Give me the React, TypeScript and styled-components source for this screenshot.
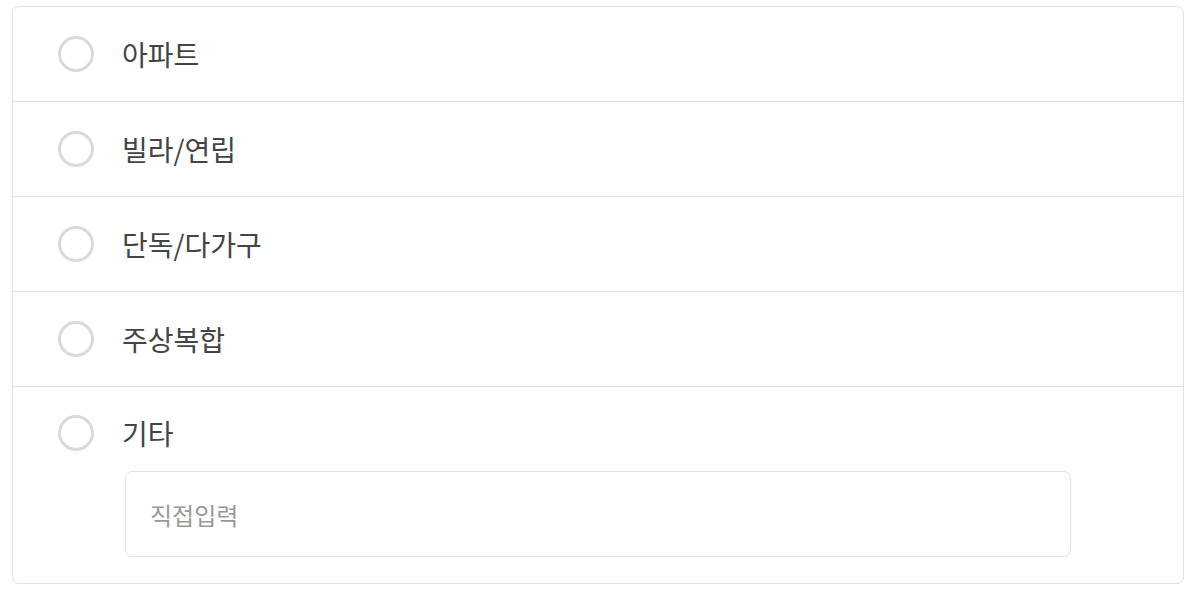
import styled, { createGlobalStyle } from "styled-components";

const GlobalStyle = createGlobalStyle`
  body {
    margin: 0;
    background: #fff;
    font-family: "Noto Sans CJK KR", "Noto Sans", sans-serif;
  }
`

const Page = styled.div`
  padding: 6px 16px 9px 12px;
`

const Card = styled.div`
  border: 1px solid #e2e2e2;
  border-radius: 7px;
  background: #fff;
  overflow: hidden;
`

const Row = styled.div`
  border-bottom: 1px solid #e2e2e2;
  &:last-child {
    border-bottom: none;
  }
`

const Option = styled.label<{ $tall?: boolean }>`
  display: flex;
  align-items: center;
  gap: 28px;
  height: ${(p) => (p.$tall ? "36px" : "94px")};
  padding: ${(p) => (p.$tall ? "28px 0 0 45px" : "0 0 0 45px")};
  cursor: pointer;
`

const Radio = styled.span`
  box-sizing: border-box;
  width: 36px;
  height: 36px;
  border-radius: 50%;
  border: 3px solid #dadada;
  flex-shrink: 0;
`

const Label = styled.span`
  font-size: 28px;
  color: #444;
`

const InputWrap = styled.div`
  padding: 20px 112px 26px;
`

const TextInput = styled.input`
  box-sizing: border-box;
  width: 100%;
  height: 86px;
  border: 1px solid #e2e2e2;
  border-radius: 7px;
  padding: 0 24px;
  font-family: "Noto Sans CJK KR", "Noto Sans", sans-serif;
  font-size: 24px;
  color: #444;
  outline: none;
  &::placeholder {
    color: #999;
  }
`

const options = ["아파트", "빌라/연립", "단독/다가구", "주상복합"];

function App() {
  return (
    <Page>
      <GlobalStyle />
      <Card>
        {options.map((o) => (
          <Row key={o}>
            <Option>
              <Radio />
              <Label>{o}</Label>
            </Option>
          </Row>
        ))}
        <Row>
          <Option $tall>
            <Radio />
            <Label>기타</Label>
          </Option>
          <InputWrap>
            <TextInput placeholder="직접입력" />
          </InputWrap>
        </Row>
      </Card>
    </Page>
  );
}

export default App;
